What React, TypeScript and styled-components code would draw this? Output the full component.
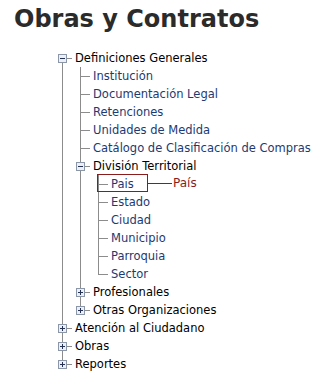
import styled, { createGlobalStyle } from 'styled-components';

type TreeNode = {
  label: string;
  link?: boolean;
  state?: 'open' | 'closed';
  note?: string;
  children?: TreeNode[];
};

type Kind = 'top' | 'mid' | 'last';

type Row = {
  node: TreeNode;
  guides: boolean[];
  kind: Kind;
};

const tree: TreeNode[] = [
  {
    label: 'Definiciones Generales',
    state: 'open',
    children: [
      { label: 'Institución', link: true },
      { label: 'Documentación Legal', link: true },
      { label: 'Retenciones', link: true },
      { label: 'Unidades de Medida', link: true },
      { label: 'Catálogo de Clasificación de Compras', link: true },
      {
        label: 'División Territorial',
        state: 'open',
        children: [
          { label: 'Pais', link: true, note: 'País' },
          { label: 'Estado', link: true },
          { label: 'Ciudad', link: true },
          { label: 'Municipio', link: true },
          { label: 'Parroquia', link: true },
          { label: 'Sector', link: true },
        ],
      },
      { label: 'Profesionales', state: 'closed' },
      { label: 'Otras Organizaciones', state: 'closed' },
    ],
  },
  { label: 'Atención al Ciudadano', state: 'closed' },
  { label: 'Obras', state: 'closed' },
  { label: 'Reportes', state: 'closed' },
];

function flatten(nodes: TreeNode[], guides: boolean[], root: boolean): Row[] {
  const rows: Row[] = [];
  nodes.forEach((node, i) => {
    const last = i === nodes.length - 1;
    const kind: Kind = root && i === 0 ? 'top' : last ? 'last' : 'mid';
    rows.push({ node, guides, kind });
    if (node.state === 'open' && node.children) {
      rows.push(...flatten(node.children, [...guides, !last], false));
    }
  });
  return rows;
}

const GlobalStyle = createGlobalStyle`
  html, body {
    margin: 0;
    padding: 0;
    background: #ffffff;
  }
  body {
    font-family: "DejaVu Sans", Verdana, sans-serif;
  }
`;

const Page = styled.div`
  width: 316px;
  height: 373px;
  overflow: hidden;
  padding: 5px 0 0 14px;
  box-sizing: border-box;
`;

const Title = styled.h1`
  margin: 0;
  font-family: "DejaVu Sans", Verdana, sans-serif;
  font-size: 24px;
  font-weight: bold;
  line-height: 28px;
  color: #2b2b2b;
`;

const Tree = styled.div`
  margin: 16px 0 0 40px;
  display: flex;
  flex-direction: column;
`;

const TreeRow = styled.div`
  position: relative;
  display: flex;
  align-items: center;
  height: 18px;
`;

const Cell = styled.svg`
  flex: none;
  width: 18px;
  height: 18px;
  display: block;
`;

const Label = styled.span<{ $link?: boolean }>`
  margin-left: 3px;
  font-size: 11.5px;
  line-height: 18px;
  white-space: nowrap;
  color: ${(p) => (p.$link ? '#1d3a72' : '#000000')};
`;

const Callout = styled.div`
  position: absolute;
  left: 43px;
  top: -1px;
  display: flex;
  align-items: center;
`;

const Frame = styled.div`
  width: 49px;
  height: 16px;
  border: 1px solid #8a1c1c;
`;

const Lead = styled.div`
  width: 24px;
  height: 1px;
  background: #8a1c1c;
`;

const Note = styled.span`
  margin-left: 1px;
  font-size: 12px;
  color: #8a1c1c;
`;

const LINE = '#8c8c8c';

function Guide({ on }: { on: boolean }) {
  return (
    <Cell viewBox="0 0 18 18">
      {on && <line x1="8.5" y1="0" x2="8.5" y2="18" stroke={LINE} />}
    </Cell>
  );
}

function Connector({ kind, state }: { kind: Kind; state?: 'open' | 'closed' }) {
  const y1 = kind === 'top' ? 9.5 : 0;
  const y2 = kind === 'last' ? 9.5 : 18;
  return (
    <Cell viewBox="0 0 18 18">
      <line x1="8.5" y1={y1} x2="8.5" y2={y2} stroke={LINE} />
      <line x1="8" y1="9.5" x2="18" y2="9.5" stroke={LINE} />
      {state && (
        <g>
          <rect x="4.5" y="5.5" width="8" height="8" fill="#eceff4" stroke="#8b97a9" />
          <line x1="6" y1="9.5" x2="11" y2="9.5" stroke="#253152" />
          {state === 'closed' && <line x1="8.5" y1="7" x2="8.5" y2="12" stroke="#253152" />}
        </g>
      )}
    </Cell>
  );
}

export default function App() {
  const rows = flatten(tree, [], true);
  return (
    <Page>
      <GlobalStyle />
      <Title>Obras y Contratos</Title>
      <Tree>
        {rows.map((row, i) => (
          <TreeRow key={i}>
            {row.guides.map((on, j) => (
              <Guide key={j} on={on} />
            ))}
            <Connector kind={row.kind} state={row.node.state} />
            <Label $link={row.node.link}>{row.node.label}</Label>
            {row.node.note && (
              <Callout>
                <Frame />
                <Lead />
                <Note>{row.node.note}</Note>
              </Callout>
            )}
          </TreeRow>
        ))}
      </Tree>
    </Page>
  );
}
